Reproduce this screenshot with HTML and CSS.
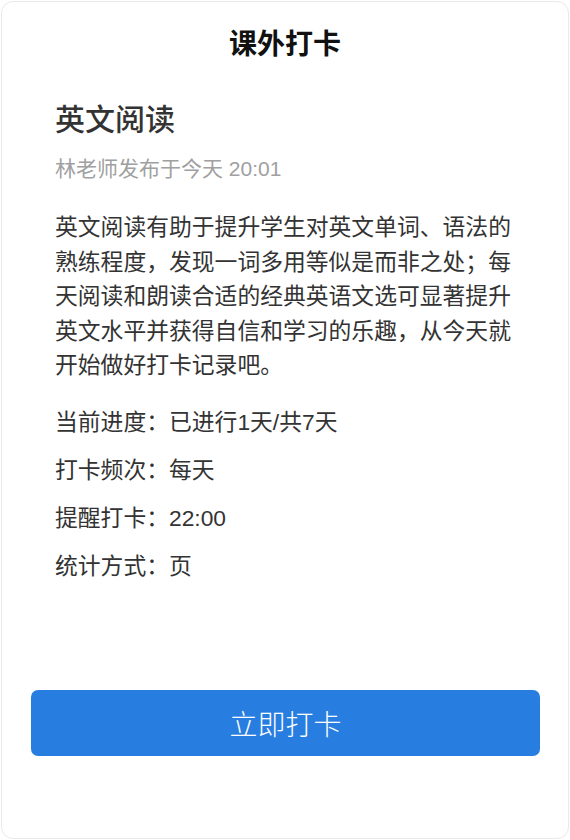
FILE: index.html
```html
<!DOCTYPE html>
<html lang="zh-CN">
<head>
    <meta charset="UTF-8">
    <title>课外打卡</title>
    <link rel="stylesheet" href="styles.css">
</head>
<body>
<div class="card">
    <h1 class="page-title">课外打卡</h1>

    <div class="content">
        <h2 class="task-title">英文阅读</h2>
        <p class="task-meta">林老师发布于今天 20:01</p>
        <p class="task-desc">英文阅读有助于提升学生对英文单词、语法的熟练程度，发现一词多用等似是而非之处；每天阅读和朗读合适的经典英语文选可显著提升英文水平并获得自信和学习的乐趣，从今天就开始做好打卡记录吧。</p>

        <ul class="info-list">
            <li>当前进度：已进行1天/共7天</li>
            <li>打卡频次：每天</li>
            <li>提醒打卡：22:00</li>
            <li>统计方式：页</li>
        </ul>
    </div>

    <div class="actions">
        <button class="checkin-button">立即打卡</button>
    </div>
</div>
</body>
</html>
```

FILE: styles.css
```css
* {
    box-sizing: border-box;
}

body {
    margin: 0;
    padding: 1px;
    background-color: #fff;
    font-family: "Liberation Sans", "Noto Sans CJK SC", sans-serif;
    color: #333;
}

.card {
    height: 838px;
    border: 1px solid #e9e9e9;
    border-radius: 12px;
    background-color: #fff;
    display: flex;
    flex-direction: column;
}

.page-title {
    margin: 23px 0 0;
    font-size: 28px;
    line-height: 40px;
    font-weight: bold;
    text-align: center;
    color: #111;
}

.content {
    padding: 0 40px 0 53px;
}

.task-title {
    margin: 35px 0 0;
    font-size: 30px;
    line-height: 40px;
    font-weight: 500;
    color: #333;
}

.task-meta {
    margin: 14px 0 0;
    font-size: 21px;
    line-height: 30px;
    color: #a0a0a0;
}

.task-desc {
    margin: 26px 0 0;
    font-size: 22.8px;
    line-height: 34.5px;
    color: #333;
}

.info-list {
    list-style: none;
    margin: 15px 0 0;
    padding: 0;
    font-size: 22.8px;
    line-height: 48px;
    color: #333;
}

/* Button sits at the bottom of the card */
.actions {
    margin-top: auto;
    padding: 0 28px 82px 29px;
}

.checkin-button {
    display: block;
    width: 100%;
    height: 66px;
    border: none;
    border-radius: 7px;
    background-color: #287ee0;
    color: #fff;
    font-family: "Liberation Sans", "Noto Sans CJK SC", sans-serif;
    font-size: 28px;
    font-weight: 300;
    cursor: pointer;
}
```
